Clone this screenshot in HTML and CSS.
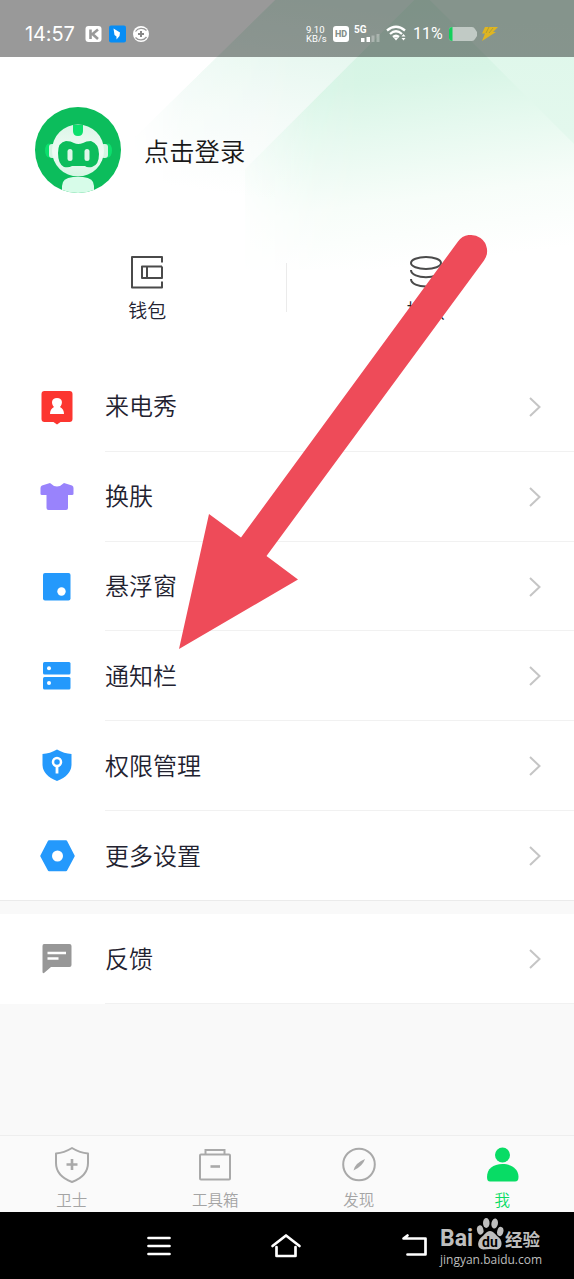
FILE: index.html
```html
<!DOCTYPE html>
<html lang="zh-CN">
<head>
<meta charset="utf-8">
<title>我</title>
<link rel="stylesheet" href="styles.css">
</head>
<body>
<div class="phone">
  <svg class="backdrop" width="574" height="330" viewBox="0 0 574 330">
    <defs>
      <linearGradient id="ga" x1="300" y1="0" x2="270" y2="200" gradientUnits="userSpaceOnUse"><stop offset="0" stop-color="#e0f6eb"/><stop offset=".3" stop-color="#e9f8f1"/><stop offset=".6" stop-color="#f4fbf8"/><stop offset="1" stop-color="#fff"/></linearGradient>
      <linearGradient id="gb" x1="390" y1="0" x2="424" y2="265" gradientUnits="userSpaceOnUse"><stop offset="0" stop-color="#d2f3e2"/><stop offset=".3" stop-color="#d8f5e6"/><stop offset=".5" stop-color="#e6f9ef"/><stop offset=".75" stop-color="#f7fdf9"/><stop offset="1" stop-color="#fff"/></linearGradient>
      <linearGradient id="gc" x1="510" y1="20" x2="500" y2="260" gradientUnits="userSpaceOnUse"><stop offset="0" stop-color="#def7ea"/><stop offset=".45" stop-color="#e3f8ed"/><stop offset="1" stop-color="#fff"/></linearGradient>
      <linearGradient id="fade" x1="135" y1="0" x2="300" y2="0" gradientUnits="userSpaceOnUse"><stop offset="0" stop-color="#fff" stop-opacity=".1"/><stop offset=".3" stop-color="#fff" stop-opacity=".8"/><stop offset="1" stop-color="#fff"/></linearGradient>
      <linearGradient id="fade2" x1="245" y1="0" x2="360" y2="0" gradientUnits="userSpaceOnUse"><stop offset="0" stop-color="#fff" stop-opacity=".2"/><stop offset=".6" stop-color="#fff" stop-opacity=".9"/><stop offset="1" stop-color="#fff"/></linearGradient>
      <mask id="ma"><path d="M275 0H574V220H135V137Z" fill="url(#fade)"/><path d="M275 0H574V57H218Z" fill="#fff"/></mask>
      <mask id="mb"><path d="M422 -8L245 169V270H574V140Z" fill="url(#fade2)"/></mask>
    </defs>
    <path d="M275 0H574V220H135V137Z" fill="url(#ga)" mask="url(#ma)"/>
    <path d="M422 -8L245 169V270H574V140Z" fill="url(#gb)" mask="url(#mb)"/>
    <path d="M430 0H574V144Z" fill="url(#gc)"/>
  </svg>

  <header class="status">
    <span class="clock">14:57</span>
    <svg class="status-apps" width="66" height="18" viewBox="0 0 66 18">
      <rect x=".5" y="1" width="16" height="16" rx="3" fill="#fff"/>
      <path d="M5.500 4.500V14M13 4.500L7.500 9L13 14" fill="none" stroke="#999" stroke-width="2.600"/>
      <rect x="24" y=".5" width="17" height="17" rx="2" fill="#078df5"/>
      <path d="M28.500 3.500L35 7.500L34.500 11L31.500 14.500L31.500 11.500L29.500 10Z" fill="#fff"/>
      <circle cx="56" cy="9" r="8" fill="#fff"/>
      <path d="M50.500 6.500A7 7 0 0 1 61.500 5.500M61.500 12A7 7 0 0 1 50.500 12.500" fill="none" stroke="#999" stroke-width="1.300"/>
      <path d="M56 6V12M53 9H59" stroke="#888" stroke-width="2"/>
    </svg>
    <span class="speed"><span>9.10</span><span>KB/s</span></span>
    <span class="hd">HD</span>
    <span class="cell"><span class="cell-type">5G</span><svg width="20" height="9" viewBox="0 0 20 9"><path d="M1 4h3.500v4H1zM6.500 3h3.500v5H6.500z" fill="#fff"/><path d="M11.500 1.500h3v6.500h-3zM16.500 0h3v8h-3z" fill="#fff" opacity=".3"/></svg></span>
    <svg class="wifi" width="21" height="17" viewBox="0 0 21 17">
      <path d="M1 5.500Q10 -2 19 5.500M4 9Q10 3.500 16 9M7 12Q10 9.500 13 12" fill="none" stroke="#fff" stroke-width="2.300"/>
      <path d="M7.500 12.500H12.500L10 15.500Z" fill="#fff"/>
      <path d="M15.500 11.500L17.500 9L19.500 11.500ZM15.500 13L17.500 15.500L19.500 13Z" fill="#fff"/>
    </svg>
    <span class="percent">11%</span>
    <svg class="battery" width="52" height="18" viewBox="0 0 52 18">
      <path d="M4 2H24Q26 2 27 4L29 7V11L27 14Q26 16 24 16H4Q1 16 1 13V5Q1 2 4 2Z" fill="#c1cac5"/>
      <path d="M4.500 2V16Q1 16 1 13V5Q1 2 4.500 2Z" fill="#13cf5b"/>
      <path d="M37 2H50L45 7H48L34 16L37 8.500H34Z" fill="#dfb521"/><path d="M41 2L38 8M45 3L41 8" fill="none" stroke="#9a933a" stroke-width=".7"/>
    </svg>
  </header>

  <section class="profile">
    <svg width="86" height="86" viewBox="0 0 86 86">
      <defs><clipPath id="face"><circle cx="43" cy="43" r="43"/></clipPath><linearGradient id="head" x1="0" y1="0" x2="0" y2="1"><stop stop-color="#dcf6e8"/><stop offset=".55" stop-color="#f0fbf5"/><stop offset="1" stop-color="#d4f6e3"/></linearGradient></defs>
      <circle cx="43" cy="43" r="43" fill="#0cbd5c"/>
      <ellipse cx="14" cy="43.500" rx="4" ry="7" fill="#0ce06d"/><ellipse cx="73" cy="43.500" rx="4" ry="7" fill="#0ce06d"/>
      <rect x="14" y="37" width="7" height="14" rx="3" fill="#d5f5e2"/><rect x="66" y="37" width="7" height="14" rx="3" fill="#d5f5e2"/>
      <circle cx="43" cy="43.500" r="26" fill="url(#head)"/>
      <path d="M38 18H48V24Q48 29 43 29Q38 29 38 24Z" fill="#0ce06d"/>
      <path d="M31 34Q36 34 39 36Q43 38 48 36Q51 34 56 34Q64 37 64 47Q64 58 57 60Q52 61 50 59H37Q34 61 29 60Q23 57 23 46Q23 35 31 34Z" fill="#0cbd5c"/>
      <rect x="32.500" y="42" width="5" height="12" rx="2.500" fill="#dff7e8"/><rect x="49.500" y="42" width="5" height="12" rx="2.500" fill="#dff7e8"/>
      <path clip-path="url(#face)" d="M27 86V79Q27 71 38 70H48Q59 71 59 79V86Z" fill="#d7fce9"/>
    </svg>
    <span class="login">点击登录</span>
  </section>

  <section class="assets">
    <div class="asset">
      <svg width="34" height="34" viewBox="0 0 34 34" fill="none" stroke="#4a4a4a" stroke-width="2" stroke-linejoin="round"><path d="M32 7.500V2H2V32.500H32V26.500M32 11.500H12V23H32V11.500M17 11.500V23"/></svg>
      <span>钱包</span>
    </div>
    <div class="asset">
      <svg width="34" height="34" viewBox="0 0 34 34" fill="none" stroke="#4a4a4a" stroke-width="2"><ellipse cx="17" cy="8" rx="15" ry="6"/><path d="M2 15C2 24.500 32 24.500 32 15M2 24C2 34 32 34 32 24"/></svg>
      <span>提款</span>
    </div>
  </section>

  <main class="menu">
    <a class="row"><svg class="icon" viewBox="0 0 36 36"><path d="M5.500 2H30.500Q33.500 2 33.500 5V30Q33.500 33 30.500 33H21.500L18 35.500L14.500 33H5.500Q2.500 33 2.500 30V5Q2.500 2 5.500 2Z" fill="#fc3630"/><path d="M18 9C24 9 24 15 21 18Q25 20 25 25H11Q11 20 15 18C12 15 12 9 18 9Z" fill="#fff"/></svg><span class="label">来电秀</span><svg class="chevron" viewBox="0 0 14 22"><path d="M2 2L11.500 11L2 20"/></svg></a>
    <a class="row"><svg class="icon" viewBox="0 0 36 36"><path d="M11 4Q18 11 25 4L33 6.500Q34.500 7 34.500 9V15Q34.500 16 33 16H29V29Q29 31 27 31H9.500Q7.500 31 7.500 29V16H3Q1.500 16 1.500 15V9Q1.500 7 3 6.500Z" fill="#9983fc"/></svg><span class="label">换肤</span><svg class="chevron" viewBox="0 0 14 22"><path d="M2 2L11.500 11L2 20"/></svg></a>
    <a class="row"><svg class="icon" viewBox="0 0 36 36"><rect x="4" y="4" width="27.500" height="27.500" rx="2" fill="#2499fc"/><circle cx="22.500" cy="22.500" r="4.200" fill="#fff"/></svg><span class="label">悬浮窗</span><svg class="chevron" viewBox="0 0 14 22"><path d="M2 2L11.500 11L2 20"/></svg></a>
    <a class="row"><svg class="icon" viewBox="0 0 36 36"><rect x="4" y="4" width="27.500" height="12.500" rx="1.500" fill="#2499fc"/><rect x="4" y="19" width="27.500" height="12.500" rx="1.500" fill="#2499fc"/><circle cx="10" cy="10.200" r="2" fill="#fff"/><circle cx="10" cy="25" r="2" fill="#fff"/></svg><span class="label">通知栏</span><svg class="chevron" viewBox="0 0 14 22"><path d="M2 2L11.500 11L2 20"/></svg></a>
    <a class="row"><svg class="icon" viewBox="0 0 36 36"><path d="M18 1.500Q25 5.500 32.500 6V17Q32 27.500 18 33Q4 27.500 3.500 17V6Q11 5.500 18 1.500Z" fill="#2499fc"/><circle cx="18" cy="14" r="4" fill="none" stroke="#fff" stroke-width="2.500"/><path d="M18 18V25.500" stroke="#fff" stroke-width="2.800"/></svg><span class="label">权限管理</span><svg class="chevron" viewBox="0 0 14 22"><path d="M2 2L11.500 11L2 20"/></svg></a>
    <a class="row"><svg class="icon" viewBox="0 0 36 36"><path d="M10 3.500H27L34.500 18L27 32H10L2.500 18Z" fill="#2499fc" stroke="#2499fc" stroke-width="2.500" stroke-linejoin="round"/><circle cx="18.500" cy="18" r="5.500" fill="#fff"/></svg><span class="label">更多设置</span><svg class="chevron" viewBox="0 0 14 22"><path d="M2 2L11.500 11L2 20"/></svg></a>
  </main>

  <section class="menu feedback">
    <a class="row"><svg class="icon" viewBox="0 0 36 36"><path d="M5 3H30.500Q32.500 3 32.500 5V24Q32.500 26 30.500 26H12L5 32Q3.500 32.500 3.500 31V5Q3.500 3 5 3Z" fill="#979797"/><path d="M8.500 12H27M8.500 17.500H19.500" stroke="#fff" stroke-width="2.500"/></svg><span class="label">反馈</span><svg class="chevron" viewBox="0 0 14 22"><path d="M2 2L11.500 11L2 20"/></svg></a>
  </section>

  <nav class="tabs">
    <a class="tab"><svg width="36" height="38" viewBox="0 0 36 38" fill="none" stroke="#a9a9a9" stroke-width="2"><path d="M18 2Q26 7 34 7.500V17Q34 30 18 36Q2 30 2 17V7.500Q10 7 18 2Z" stroke-linejoin="round"/><path d="M18 13V24M12.500 18.500H23.500" stroke-width="2.600"/></svg><span>卫士</span></a>
    <a class="tab"><svg width="36" height="38" viewBox="0 0 36 38" fill="none" stroke="#a9a9a9" stroke-width="2"><rect x="3" y="8.500" width="30" height="25" rx="1"/><path d="M8.500 8.500V4H27.500V8.500"/><path d="M13.500 20.500H23" stroke-width="2.600"/></svg><span>工具箱</span></a>
    <a class="tab"><svg width="36" height="38" viewBox="0 0 36 38"><circle cx="18" cy="18.500" r="15.800" fill="none" stroke="#a9a9a9" stroke-width="2"/><path d="M24 13Q22 20 12.500 24.500Q14 17 24 13Z" fill="#a9a9a9"/></svg><span>发现</span></a>
    <a class="tab active"><svg width="36" height="38" viewBox="0 0 36 38" fill="#08dc65"><circle cx="18.500" cy="9" r="7.500"/><path d="M18.500 18C28 18 34.500 23 34.500 31Q34.500 35.500 31 35.500H6Q3 35.500 3 31C3 23 9 18 18.500 18Z"/></svg><span>我</span></a>
  </nav>

  <footer class="system">
    <svg width="26" height="22" viewBox="0 0 26 22"><path d="M2.500 3H23.500M2.500 11H23.500M2.500 19H23.500" stroke="#fff" stroke-width="2.700" stroke-linecap="round"/></svg>
    <svg width="32" height="26" viewBox="0 0 32 26"><path d="M2.500 13L16 2.500L29.500 13M6.500 14V23H25.500V14" fill="none" stroke="#fff" stroke-width="2.700" stroke-linecap="round" stroke-linejoin="round"/></svg>
    <svg width="28" height="26" viewBox="0 0 28 26"><path d="M7.500 21.500H25.500V5.500H3.500L7.500 2.500" fill="none" stroke="#fff" stroke-width="2.700" stroke-linejoin="round" stroke-linecap="round"/></svg>
    <div class="brand">
      <div class="brand-name"><span class="bai">Bai</span><span class="paw"><svg width="28" height="33" viewBox="0 0 30 33" preserveAspectRatio="none" fill="#bebebe"><ellipse cx="4.500" cy="13" rx="3.400" ry="4.700" transform="rotate(-15 4.500 13)"/><ellipse cx="11" cy="6" rx="3.500" ry="5"/><ellipse cx="20" cy="6.500" rx="3.500" ry="5" transform="rotate(12 20 6.500)"/><ellipse cx="26" cy="14.500" rx="3.300" ry="4.700" transform="rotate(15 26 14.500)"/><path d="M15 14C19 14 21 18 25 21C29 25 28 32 22 32.500L15 32L8 32.500C1 32 1 25 5 21C9 18 11 14 15 14Z"/></svg><b>du</b></span><span class="exp">经验</span></div>
      <div class="brand-url">jingyan.baidu.com</div>
    </div>
  </footer>

  <svg class="arrow" width="574" height="700" viewBox="0 0 574 700"><path d="M179 649L209 514L241 537.500L458 241.500A16 16 0 0 1 484 260.500L266.500 556L298 579.500Z" fill="#ee4b59"/></svg>
</div>
</body>
</html>
```
FILE: styles.css
```css
* { box-sizing: border-box; }
body { margin: 0; background: #f8f8f8; }
.phone {
  position: relative;
  width: 574px;
  height: 1279px;
  display: flex;
  flex-direction: column;
  overflow: hidden;
  background: linear-gradient(#fff 362px, #f9f9f9 362px);
  font-family: Roboto, "Noto Sans CJK SC", sans-serif;
  color: #222230;
}
.backdrop { position: absolute; top: 0; left: 0; }
.arrow { position: absolute; top: 0; left: 0; }
.status {
  position: relative;
  height: 57px;
  flex: none;
  padding: 10px 0 0 25px;
  display: flex;
  align-items: center;
  background: rgba(0, 0, 0, .4);
  color: #fff;
}
.clock { width: 60px; font: 20px Inter, sans-serif; letter-spacing: -.1px; }
.status-apps { flex: none; }
.speed { width: 27px; margin-left: 155px; display: flex; flex-direction: column; font: 400 9.500px/9px Roboto, sans-serif; }
.hd { width: 16px; height: 16px; border-radius: 3px; background: #fff; color: #858f8a; font: 800 9px/16px Roboto, sans-serif; text-align: center; }
.cell { width: 28px; height: 18px; margin-left: 5px; display: flex; flex-direction: column; }
.cell-type { font: bold 10px/9px Roboto, sans-serif; }
.cell svg { margin-left: 6px; }
.wifi { margin-left: 4px; }
.percent { width: 35px; margin-left: 6px; font: 400 16px Roboto, sans-serif; letter-spacing: 0; }
.profile { position: relative; height: 186px; flex: none; padding: 0 35px; display: flex; align-items: center; }
.login { margin: -1px 0 0 23px; font-size: 25.300px; color: #181818; font-weight: 350; }
.profile svg { flex: none; }
.assets { position: relative; height: 119px; flex: none; padding: 12px 9px 0 8px; display: flex; }
.assets::after { content: ""; position: absolute; left: 286px; top: 20px; width: 1px; height: 49px; background: #ebebeb; }
.asset { flex: 1; display: flex; flex-direction: column; align-items: center; gap: 9px; font-size: 19px; line-height: 28px; font-weight: 350; }
.menu { flex: none; height: 539px; display: flex; flex-direction: column; background: #fff; }
.row { flex: 1; margin: 0 32px 0 39px; display: flex; align-items: center; position: relative; }
.row::after { content: ""; position: absolute; left: 66px; right: -32px; bottom: 0; height: 1px; background: #f1f1f1; }
main .row:last-child::after { left: -40px; background: #ebebeb; }
.icon { width: 36px; height: 36px; flex: none; }
.label { flex: 1; margin: 1px 0 0 30px; font-size: 24px; line-height: 36px; font-weight: 350; }
.chevron { width: 14px; height: 22px; fill: none; stroke: #c5c5c5; stroke-width: 2; }
.feedback { height: 90px; margin-top: 13px; }
.tabs { flex: none; height: 77px; margin-top: auto; display: flex; border-top: 1px solid #eee; background: #fafafa; color: #a4a4a4; }
.tab { flex: 1; display: flex; flex-direction: column; align-items: center; padding-top: 10px; font-size: 15.500px; line-height: 22px; gap: 6px; font-weight: 350; }
.active { color: #08dc65; }
.system { flex: none; height: 67px; padding-left: 146px; display: flex; align-items: center; background: #000; }
.system > svg { flex: none; margin-right: 98px; }
.system > svg:nth-child(3) { margin-right: 12px; }
.brand { width: 106px; height: 60px; color: #bebebe; }
.brand-name { display: flex; height: 34px; align-items: flex-end; }
.bai { width: 36px; font: bold 23px/23px Roboto, sans-serif; }
.paw { position: relative; width: 28px; height: 33px; }
.paw b { position: absolute; left: 6px; bottom: 0; font: bold 14px/16px Roboto, sans-serif; color: #000; }
.exp { margin-left: 1px; font: bold 17.500px/23px "Noto Sans CJK SC", sans-serif; }
.brand-url { margin-top: 2px; font: 12px/16px "Open Sans", sans-serif; letter-spacing: 0; }
```
